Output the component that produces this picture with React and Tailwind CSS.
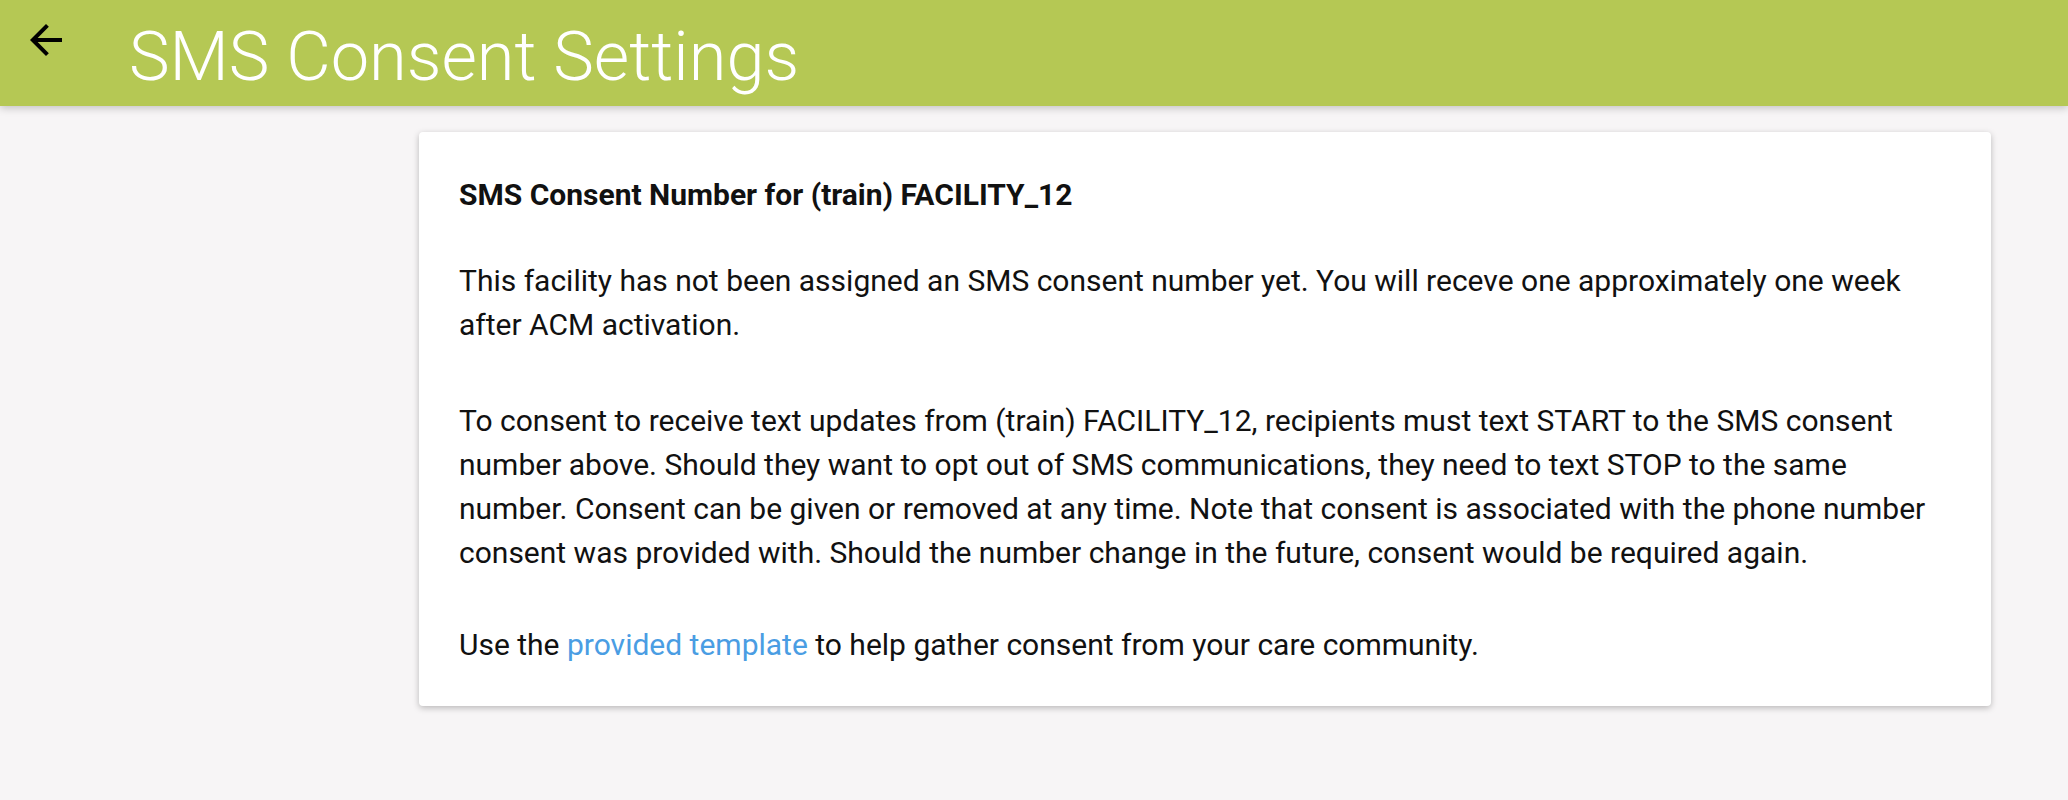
import React from "react";

function BackArrow() {
  return (
    <svg width="48" height="48" viewBox="0 0 24 24" fill="currentColor" className="text-black">
      <path d="M20 11H7.83l5.59-5.59L12 4l-8 8 8 8 1.41-1.41L7.83 13H20v-2z" />
    </svg>
  );
}

export default function App() {
  return (
    <div className="min-h-screen bg-[#f7f5f6] font-['Roboto',sans-serif]">
      <header className="relative z-10 flex items-start h-[106px] bg-[#b5c854] shadow-[0_2px_8px_rgba(0,0,0,0.22)]">
        <button className="ml-[22px] mt-[16px]">
          <BackArrow />
        </button>
        <h1 className="ml-[59px] pt-[23px] text-[68.5px] leading-none font-light text-white">
          SMS Consent Settings
        </h1>
      </header>

      <main className="pt-[26px] pb-10">
        <div className="ml-[419px] w-[1572px] bg-white rounded-[4px] shadow-[0_2px_6px_rgba(0,0,0,0.25)] px-10 pt-[41px] pb-[39px] text-[30px] leading-[44px] text-[#111]">
          <h2 className="font-bold mb-[42px]">SMS Consent Number for (train) FACILITY_12</h2>
          <p className="mb-[52px]">
            This facility has not been assigned an SMS consent number yet. You will receve one approximately one week after ACM activation.
          </p>
          <p className="mb-[48px]">
            To consent to receive text updates from (train) FACILITY_12, recipients must text START to the SMS consent number above. Should they want to opt out of SMS communications, they need to text STOP to the same number. Consent can be given or removed at any time. Note that consent is associated with the phone number consent was provided with. Should the number change in the future, consent would be required again.
          </p>
          <p>
            Use the{" "}
            <a href="#" className="text-[#4a9de3]">
              provided template
            </a>{" "}
            to help gather consent from your care community.
          </p>
        </div>
      </main>
    </div>
  );
}
